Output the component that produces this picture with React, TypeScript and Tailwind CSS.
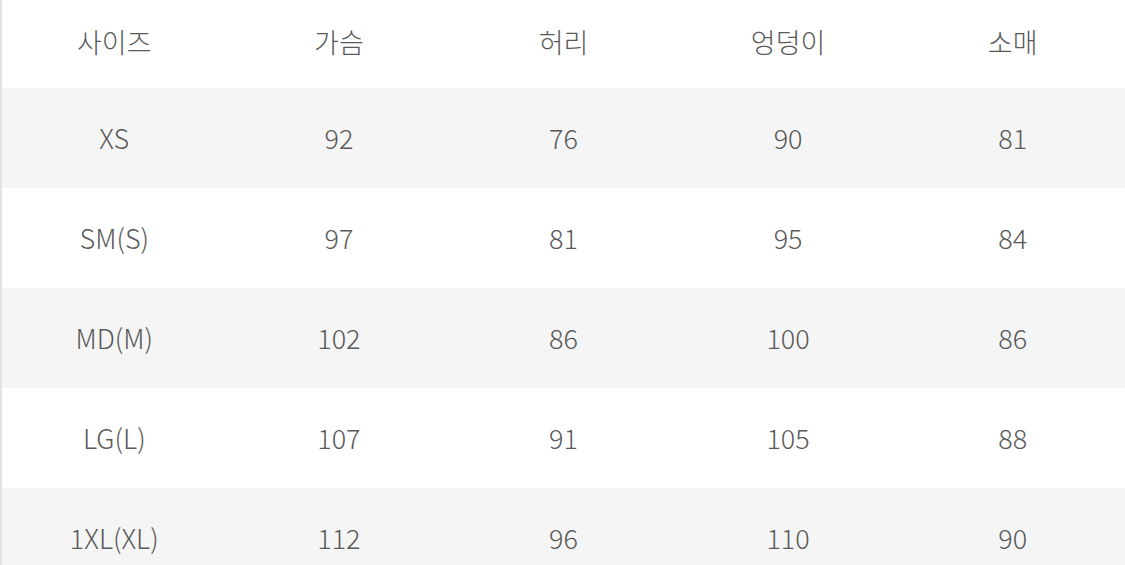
import React from "react";

const headers = ["사이즈", "가슴", "허리", "엉덩이", "소매"];
const rows = [
  ["XS", "92", "76", "90", "81"],
  ["SM(S)", "97", "81", "95", "84"],
  ["MD(M)", "102", "86", "100", "86"],
  ["LG(L)", "107", "91", "105", "88"],
  ["1XL(XL)", "112", "96", "110", "90"],
];

export default function App() {
  return (
    <div
      className="w-[1125px] h-[565px] overflow-hidden bg-white border-l-2 border-[#e4e4e4] text-[#595959] text-[27px] font-light"
      style={{ fontFamily: '"Noto Sans CJK KR", "Noto Sans", sans-serif' }}
    >
      <div className="grid grid-cols-5 h-[88px] items-center bg-white pb-[3px]">
        {headers.map((h) => (
          <div key={h} className="text-center">{h}</div>
        ))}
      </div>
      {rows.map((r, i) => (
        <div
          key={r[0]}
          className={`grid grid-cols-5 h-[100px] items-center ${i % 2 === 0 ? "bg-[#f5f5f5]" : "bg-white"}`}
        >
          {r.map((c, j) => (
            <div key={j} className="text-center">{c}</div>
          ))}
        </div>
      ))}
    </div>
  );
}
